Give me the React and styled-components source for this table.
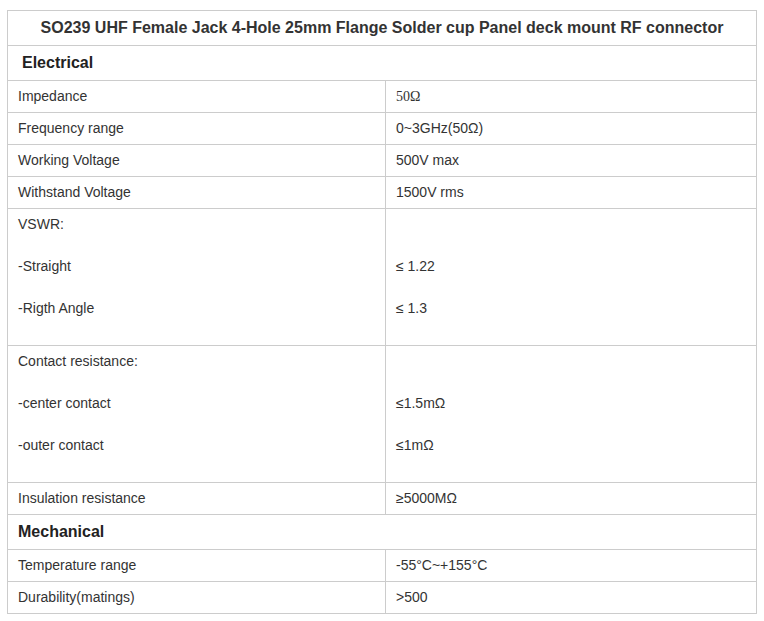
import styled, { createGlobalStyle } from "styled-components";

const GlobalStyle = createGlobalStyle`
  body {
    margin: 0;
    background: #fff;
    font-family: "Liberation Sans", Arial, sans-serif;
    color: #333;
  }
`;

const Page = styled.div`
  padding: 10px 7px;
`;

const SpecTable = styled.table`
  border-collapse: collapse;
  width: 750px;
  table-layout: fixed;
  font-size: 14px;
  line-height: 21px;
  color: #333;
`;

const Cell = styled.td`
  border: 1px solid #ccc;
  padding: 5px 10px;
  vertical-align: top;
  font-family: ${({ $serif }) =>
    $serif ? '"Liberation Serif", "Times New Roman", serif' : "inherit"};
`;

const TitleCell = styled.td`
  border: 1px solid #ccc;
  padding: 5px 10px;
  text-align: center;
  font-size: 16px;
  font-weight: bold;
  line-height: 24px;
  color: #333;
`;

const SectionCell = styled.td`
  border: 1px solid #ccc;
  padding: 5px 10px 5px ${({ $indent = 10 }) => `${$indent}px`};
  font-size: 16px;
  font-weight: bold;
  line-height: 24px;
  color: #222;
`;

const Para = styled.p`
  margin: 0 0 21px;
  min-height: 21px;
`;

const rowsElectrical = [
  ["Impedance", "50Ω", true],
  ["Frequency range", "0~3GHz(50Ω)"],
  ["Working Voltage", "500V max"],
  ["Withstand Voltage", "1500V rms"],
];

function MultiRow({ heading, items }) {
  return (
    <tr>
      <Cell>
        <Para>{heading}</Para>
        {items.map(([label]) => (
          <Para key={label}>{label}</Para>
        ))}
      </Cell>
      <Cell>
        <Para>{"\u00a0"}</Para>
        {items.map(([label, value]) => (
          <Para key={label}>{value}</Para>
        ))}
      </Cell>
    </tr>
  );
}

export default function App() {
  return (
    <>
      <GlobalStyle />
      <Page>
        <SpecTable>
          <colgroup>
            <col style={{ width: "378px" }} />
            <col />
          </colgroup>
          <tbody>
            <tr>
              <TitleCell colSpan={2}>
                SO239 UHF Female Jack 4-Hole 25mm Flange Solder cup Panel deck mount RF connector
              </TitleCell>
            </tr>
            <tr>
              <SectionCell colSpan={2} $indent={14}>
                Electrical
              </SectionCell>
            </tr>
            {rowsElectrical.map(([label, value, serif]) => (
              <tr key={label}>
                <Cell>{label}</Cell>
                <Cell $serif={serif}>{value}</Cell>
              </tr>
            ))}
            <MultiRow
              heading="VSWR:"
              items={[
                ["-Straight", "≤ 1.22"],
                ["-Rigth Angle", "≤ 1.3"],
              ]}
            />
            <MultiRow
              heading="Contact resistance:"
              items={[
                ["-center contact", "≤1.5mΩ"],
                ["-outer contact", "≤1mΩ"],
              ]}
            />
            <tr>
              <Cell>Insulation resistance</Cell>
              <Cell>≥5000MΩ</Cell>
            </tr>
            <tr>
              <SectionCell colSpan={2}>Mechanical</SectionCell>
            </tr>
            <tr>
              <Cell>Temperature range</Cell>
              <Cell>-55°C~+155°C</Cell>
            </tr>
            <tr>
              <Cell>Durability(matings)</Cell>
              <Cell>&gt;500</Cell>
            </tr>
          </tbody>
        </SpecTable>
      </Page>
    </>
  );
}
